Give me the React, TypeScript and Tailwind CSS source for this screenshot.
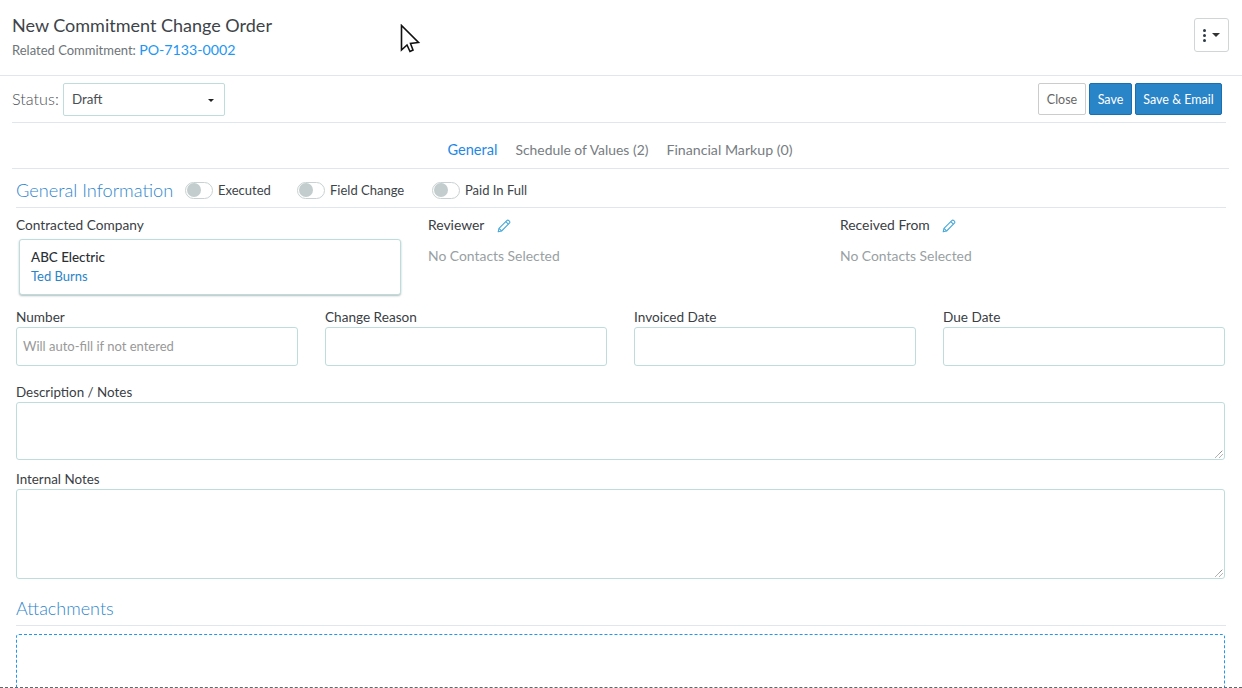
import React from "react";

function Toggle({ label, className }: { label: string; className: string }) {
  return (
    <div className={`flex items-center ${className}`}>
      <div className="flex h-[17px] w-[28px] items-center rounded-full border border-[#c8d2d2] bg-white pl-[1px]">
        <div className="h-[14px] w-[14px] rounded-full bg-[#c3cdcd]" />
      </div>
      <span className="ml-[5px] text-[13px] leading-[18px] text-[#3d4449]">{label}</span>
    </div>
  );
}

function Pencil() {
  return (
    <svg width="14" height="14" viewBox="0 0 14 14" fill="none" stroke="#4aa8d8" strokeWidth="1.1" strokeLinejoin="round">
      <path d="M1.2 12.8 L2 9.4 L9.8 1.6 C10.4 1 11.2 1 11.8 1.6 L12.4 2.2 C13 2.8 13 3.6 12.4 4.2 L4.6 12 Z" />
      <path d="M8.8 2.6 L11.4 5.2" />
      <path d="M2 9.4 L4.6 12" />
    </svg>
  );
}

function Field({ label, placeholder }: { label: string; placeholder?: string }) {
  return (
    <div className="w-[282px]">
      <div className="h-[19px] pt-[1px] text-[13.6px] leading-[19px] text-[#3a4045]">{label}</div>
      <div className="mt-[1px] flex h-[39px] items-center rounded-[3px] border border-[#bfdcdc] bg-white pl-[6px] text-[13px] text-[#999]">
        {placeholder}
      </div>
    </div>
  );
}

function Notes({ label, height }: { label: string; height: string }) {
  return (
    <div>
      <div className="h-[19px] pt-[1px] text-[13.4px] leading-[19px] text-[#3a4045]">{label}</div>
      <div className={`relative mt-[1px] rounded-[3px] border border-[#bfdcdc] bg-white ${height}`}>
        <svg className="absolute bottom-[1px] right-[1px]" width="8" height="8" viewBox="0 0 8 8" stroke="#666" strokeWidth="1">
          <path d="M0.5 7.5 L7.5 0.5" strokeDasharray="1 0.6" />
          <path d="M4.5 7.5 L7.5 4.5" strokeDasharray="1 0.6" />
        </svg>
      </div>
    </div>
  );
}

export default function App() {
  return (
    <div className="relative h-[688px] w-[1242px] overflow-hidden bg-white font-['Lato','Noto_Sans',sans-serif]">
      <header className="flex h-[76px] items-center justify-between border-b border-[#dfe7ec] pl-[12px] pr-[13px]">
        <div className="-mt-[4px]">
          <div className="text-[18px] leading-[26px] text-[#3d4449]">New Commitment Change Order</div>
          <div className="mt-[2px] text-[13px] leading-[20px] text-[#6e7478]">
            Related Commitment: <span className="text-[14.2px] text-[#2196f3]">PO-7133-0002</span>
          </div>
        </div>
        <div className="-mt-[5px] flex h-[34px] w-[35px] items-center justify-center gap-[6px] rounded-[3px] border border-[#cfd6d6] bg-white">
          <div className="flex flex-col gap-[2px]">
            <div className="h-[3px] w-[3px] rounded-full bg-[#2c3a47]" />
            <div className="h-[3px] w-[3px] rounded-full bg-[#2c3a47]" />
            <div className="h-[3px] w-[3px] rounded-full bg-[#2c3a47]" />
          </div>
          <div className="h-0 w-0 border-x-[4px] border-t-[4px] border-x-transparent border-t-[#333]" />
        </div>
      </header>

      <div className="ml-[12px] flex h-[47px] w-[1214px] items-center justify-between border-b border-[#dfe7ec] pr-[4px]">
        <div className="flex items-center">
          <span className="w-[48px] text-[16.2px] font-light text-[#4a5055]">Status:</span>
          <div className="ml-[3px] flex h-[33px] w-[162px] items-center justify-between rounded-[2px] border border-[#bfdcdc] bg-white pl-[8px] pr-[10px] pt-[1px] text-[13.4px] text-[#4a4f54]">
            Draft
            <div className="mt-[2px] h-0 w-0 border-x-[3px] border-t-[3px] border-x-transparent border-t-[#222]" />
          </div>
        </div>
        <div className="flex items-center gap-[3px] text-[12.5px]">
          <div className="flex h-[32px] w-[48px] items-center justify-center rounded-[2px] border border-[#ccc] bg-white pt-[2px] text-[#666]">Close</div>
          <div className="flex h-[32px] w-[43px] items-center justify-center rounded-[2px] border border-[#1a6fb0] bg-[#2a84c8] pt-[2px] text-white">Save</div>
          <div className="flex h-[32px] w-[87px] items-center justify-center rounded-[2px] border border-[#1a6fb0] bg-[#2a84c8] pt-[2px] text-white">Save &amp; Email</div>
        </div>
      </div>

      <div className="ml-[12px] flex h-[46px] w-[1217px] items-baseline justify-center gap-[18px] border-b border-[#dfe7ec] pr-[1px] pt-[18px]">
        <span className="text-[14.6px] leading-[18px] text-[#1e88e5]">General</span>
        <span className="text-[13.9px] leading-[18px] text-[#777d82]">Schedule of Values (2)</span>
        <span className="text-[14.2px] leading-[18px] text-[#777d82]">Financial Markup (0)</span>
      </div>

      <div className="mx-[16px] flex h-[39px] items-center border-b border-[#dfe7ec] pt-[4px]">
        <h2 className="w-[169px] pt-[1px] text-[18.2px] font-light text-[#2f86cc]">General Information</h2>
        <Toggle label="Executed" className="w-[112px]" />
        <Toggle label="Field Change" className="w-[135px]" />
        <Toggle label="Paid In Full" className="" />
      </div>

      <div className="mx-[16px] mt-[7px] flex h-[90px]">
        <div className="w-[412px]">
          <div className="h-[19px] text-[13.7px] leading-[19px] text-[#3a4045]">Contracted Company</div>
          <div className="ml-[3px] mt-[5px] h-[56px] w-[382px] rounded-[3px] border border-[#bfdcdc] bg-white pl-[11px] pt-[8px] shadow-[0_1px_2px_rgba(90,110,110,0.45)]">
            <div className="text-[13.4px] font-medium leading-[19px] text-[#2a3035]">ABC Electric</div>
            <div className="text-[13px] leading-[19px] text-[#2a84c8]">Ted Burns</div>
          </div>
        </div>
        <div className="w-[412px]">
          <div className="flex h-[19px] items-center gap-[13px] pt-[2px] text-[13.9px] text-[#3a4045]">Reviewer <Pencil /></div>
          <div className="mt-[12px] text-[13.9px] leading-[19px] text-[#999fa3]">No Contacts Selected</div>
        </div>
        <div>
          <div className="flex h-[19px] items-center gap-[12px] pt-[2px] text-[13.9px] text-[#3a4045]">Received From <Pencil /></div>
          <div className="mt-[12px] text-[13.9px] leading-[19px] text-[#999fa3]">No Contacts Selected</div>
        </div>
      </div>

      <div className="mx-[16px] mt-[2px] flex gap-[27px]">
        <Field label="Number" placeholder="Will auto-fill if not entered" />
        <Field label="Change Reason" />
        <Field label="Invoiced Date" />
        <Field label="Due Date" />
      </div>

      <div className="ml-[16px] mr-[17px] mt-[16px] flex flex-col gap-[9px]">
        <Notes label="Description / Notes" height="h-[58px]" />
        <Notes label="Internal Notes" height="h-[90px]" />
      </div>

      <div className="mx-[16px] mt-[18px] h-[29px] border-b border-[#dfe7ec] text-[18px] font-light leading-[22px] text-[#2f86cc]">Attachments</div>
      <div className="ml-[16px] mr-[17px] mt-[8px] h-[70px] rounded-[3px] border border-dashed border-[#2196f3]" />

      <div className="absolute bottom-0 left-0 h-0 w-full border-b border-dashed border-[#666]" />

      <svg className="absolute left-[400px] top-[24px]" width="21" height="30" viewBox="0 0 21 30">
        <path d="M1.5 1.5 V26 L7 21 L10 27.5 L13 26 L10.5 19.5 L18.5 18.5 Z" fill="white" stroke="#111" strokeWidth="1.6" strokeLinejoin="miter" />
      </svg>
    </div>
  );
}
